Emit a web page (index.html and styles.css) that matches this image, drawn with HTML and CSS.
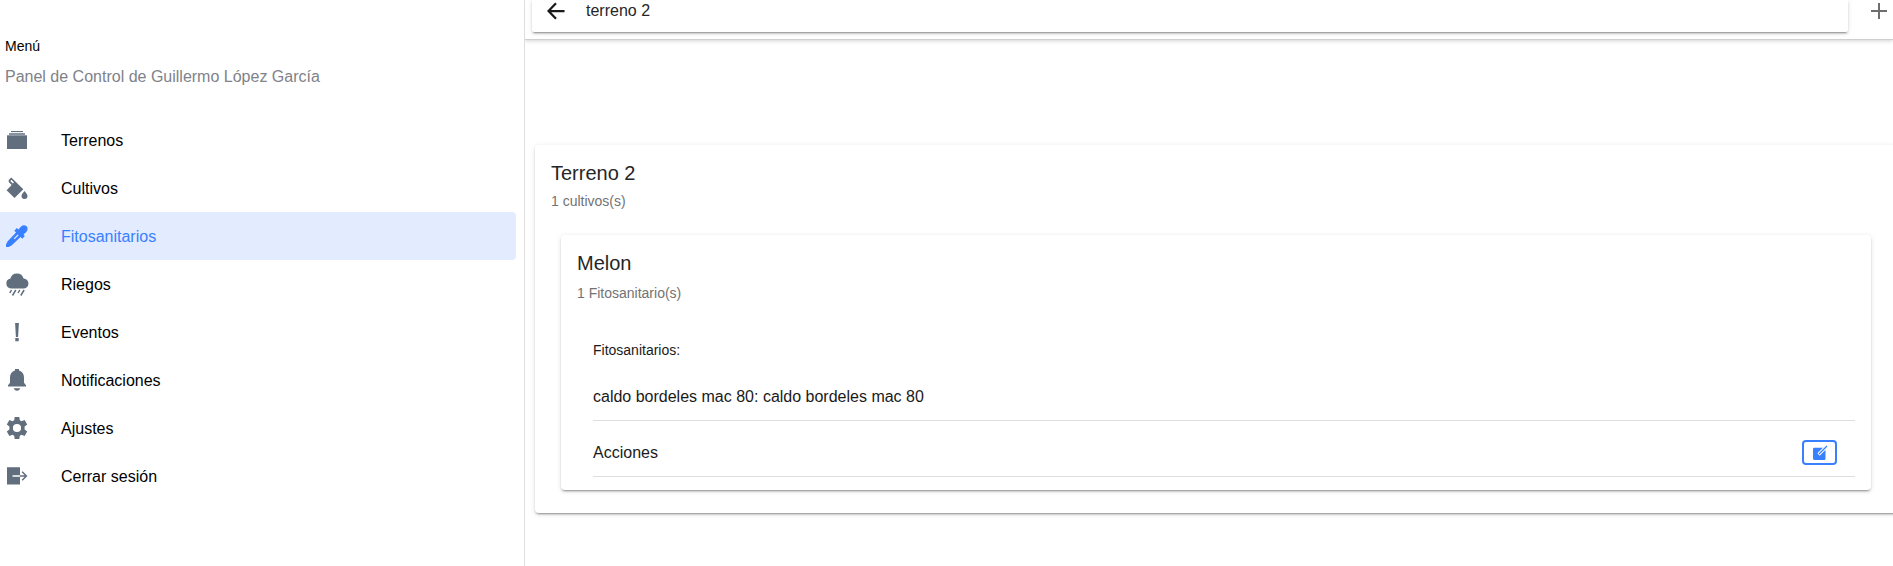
FILE: index.html
```html
<!DOCTYPE html>
<html lang="es">
<head>
<meta charset="utf-8">
<title>Fitosanitarios</title>
<link rel="stylesheet" href="styles.css">
</head>
<body>
<div class="app">
  <aside class="menu">
    <h1 class="menu-title">Menú</h1>
    <p class="menu-note">Panel de Control de Guillermo López García</p>
    <nav class="menu-list">
      <a class="menu-item"><svg class="icon" viewBox="0 0 24 24"><path d="M2 7.300h20V21H2z"/><path class="soft" d="M4 5h16v2H4z"/><path d="M6 3h12v1.100H6z"/></svg><span>Terrenos</span></a>
      <a class="menu-item"><svg class="icon" viewBox="0 0 24 24"><path fill-rule="evenodd" d="M6.300 1.500 18.300 13.200 9.500 22 1.600 14.200 6.700 9 3.700 6V4.100zM6.500 3.700 5.300 5 7.800 7.600 9 6.400z"/><path d="M19.500 15c1.300 1.700 3 3.200 3 5a3 3 0 0 1-6 0c0-1.800 1.700-3.300 3-5z"/></svg><span>Cultivos</span></a>
      <a class="menu-item selected"><svg class="icon" viewBox="0 0 24 24"><path fill-rule="evenodd" d="M21.500 2.300c-1.500-1.500-4-1.300-5.400.2l-2.700 2.900-1.500-1.300-2.600 2.600 1.700 1.700L2.500 17.500 1 20.500V23h2.500l3-1.500 9.100-8.500 1.700 1.700 2.500-2.600-1.300-1.500 2.800-2.700c1.600-1.500 1.700-4.300.3-5.900zM12.700 10.400l.9.900-4 4-.9-.9z"/></svg><span>Fitosanitarios</span></a>
      <a class="menu-item"><svg class="icon" viewBox="0 0 24 24"><path d="M6 16.500a5 5 0 0 1-.6-9.900 6.800 6.800 0 0 1 13.200-.1A5 5 0 0 1 18.300 16.500z"/><path class="line" d="m6.500 18-1.700 3M10.800 18l-3.300 5.500M14.800 18l-1.700 3M19.100 18l-3.300 5.500"/></svg><span>Riegos</span></a>
      <a class="menu-item"><svg class="icon" viewBox="0 0 24 24"><path d="M10.100 3h3.800l-.8 14h-2.200zM10.300 18h3.400v3.200h-3.400z"/></svg><span>Eventos</span></a>
      <a class="menu-item"><svg class="icon" viewBox="0 0 24 24"><path d="M21 17.300v1.200H3v-1.200l2-2.500V9.500c0-3.400 1.800-6.200 5-7V1h4v1.500c3.200.8 5 3.600 5 7v5.300zM8.800 20.300h6.400c-.4 1.600-1.500 2.500-3.200 2.500s-2.800-.9-3.200-2.500z"/></svg><span>Notificaciones</span></a>
      <a class="menu-item"><svg class="icon" viewBox="0 0 24 24"><path fill-rule="evenodd" d="M9.700 1h4.600l.5 3.200 1.700 1 3.100-1.200 2.600 4.400-2.600 2v3.200l2.600 2-2.600 4.400-3.100-1.200-1.700 1-.5 3.200H9.700l-.5-3.200-1.700-1L4.400 20l-2.600-4.400 2.600-2v-3.200l-2.600-2L4.400 4l3.100 1.200 1.700-1zM12 7.900a4.100 4.100 0 1 0 0 8.200 4.100 4.100 0 0 0 0-8.200z"/></svg><span>Ajustes</span></a>
      <a class="menu-item"><svg class="icon" viewBox="0 0 24 24"><path d="M2 3.200h13v8H7.500v1.600H15v7.700H2z"/><path class="line" d="M15 12h6M17.200 7.800l4.200 4.200-4.200 4.200"/></svg><span>Cerrar sesión</span></a>
    </nav>
  </aside>
  <main class="page">
    <header class="toolbar">
      <div class="search">
        <svg class="back" viewBox="0 0 20 20"><path d="M19.500 10H2M10 1.300 1.700 10l8.300 8.700"/></svg>
        <span>terreno 2</span>
      </div>
      <svg class="add" viewBox="0 0 16 16"><path d="M8 0v16M0 8h16"/></svg>
    </header>
    <section class="content">
      <article class="card plot">
        <h2 class="card-title">Terreno 2</h2>
        <p class="card-sub">1 cultivos(s)</p>
        <article class="card crop">
          <h2 class="card-title">Melon</h2>
          <p class="card-sub crop-sub">1 Fitosanitario(s)</p>
          <div class="list">
            <div class="list-head">Fitosanitarios:</div>
            <div class="row product">caldo bordeles mac 80: caldo bordeles mac 80</div>
            <div class="row actions"><span>Acciones</span>
              <button class="edit" aria-label="Editar"><svg viewBox="0 0 16 16"><path d="M1 3.500 2 2.700h10L13.500 5v9l-.8 1H2l-1-1z"/><path class="gap" d="m6.500 9.500 7-7"/><path class="pen" d="m7 9 8-8"/></svg></button>
            </div>
          </div>
        </article>
      </article>
    </section>
  </main>
</div>
</body>
</html>
```
FILE: styles.css
```css
* { box-sizing: border-box; }
body { margin: 0; background: #fff; color: #000; font: 16px/20px "Liberation Sans", Arial, sans-serif; }
h1, h2, p { margin: 0; font-weight: 400; }
.app { display: flex; width: 1893px; height: 566px; overflow: hidden; }

.menu { flex: 0 0 525px; border-right: 1px solid #dedede; padding-top: 36px; }
.menu-title { padding-left: 5px; font-size: 14px; line-height: 20px; }
.menu-note { padding: 11px 0 0 5px; color: #808289; }
.menu-list { margin-top: 29px; }
.menu-item { display: flex; align-items: center; gap: 32px; width: 516px; height: 48px; padding-left: 5px; border-radius: 0 4px 4px 0; }
.menu-item span { padding-top: 2px; }
.icon { width: 24px; height: 24px; fill: #616e7e; }
.icon .soft { opacity: .75; }
.icon .line { fill: none; stroke: #616e7e; stroke-width: 1.500; }
.selected { background: #e3ebff; color: #3880ff; }
.selected .icon { fill: #3880ff; }

.page { flex: 1; min-width: 0; background: #fff; }
.toolbar { display: flex; height: 39px; padding-left: 7px; box-shadow: 0 1px 0 #cfcfcf, 0 2px 4px rgba(0,0,0,.18); clip-path: inset(0 0 -8px 0); }
.search { display: flex; align-items: center; gap: 21px; width: 1316px; height: 32px; padding: 0 0 10px 15px; border-radius: 0 0 2px 2px; color: #262626; box-shadow: 0 2px 2px 0 rgba(0,0,0,.14), 0 3px 1px -2px rgba(0,0,0,.2), 0 1px 5px 0 rgba(0,0,0,.12); }
.back { width: 18px; height: 18px; fill: none; stroke: #1a1a1a; stroke-width: 2.500; }
.add { width: 16px; height: 16px; margin: 3px 0 0 23px; fill: none; stroke: #6d6d6d; stroke-width: 2; }

.content { padding: 106px 0 0 10px; }
.card { border-radius: 4px; background: #fff; box-shadow: 0 3px 1px -2px rgba(0,0,0,.2), 0 2px 2px 0 rgba(0,0,0,.14), 0 1px 5px 0 rgba(0,0,0,.12); }
.plot { width: 1363px; height: 368px; padding: 16px 0 0 16px; }
.card-title { font-size: 20px; line-height: 24px; color: #262626; }
.card-sub { margin-top: 8px; font-size: 14px; line-height: 17px; color: #737373; }
.crop { width: 1310px; height: 255px; margin: 25px 0 0 10px; padding: 16px 16px 0; }
.crop-sub { margin-top: 10px; }
.list { margin-top: 25px; padding-left: 16px; color: #1a1a1a; }
.list-head { height: 45px; padding-top: 13px; font-size: 14px; }
.row { display: flex; align-items: center; justify-content: space-between; padding-right: 18px; border-bottom: 1px solid #dedede; }
.product { height: 49px; padding-top: 2px; }
.actions { height: 56px; padding-top: 8px; }
.edit { display: flex; align-items: center; justify-content: center; width: 35px; height: 25px; padding: 0; border: 2px solid #3880ff; border-radius: 4px; background: #fff; }
.edit svg { width: 16px; height: 16px; fill: #3880ff; }
.edit .gap { stroke: #fff; stroke-width: 3.200; }
.edit .pen { stroke: #3880ff; stroke-width: 1.300; }
```
